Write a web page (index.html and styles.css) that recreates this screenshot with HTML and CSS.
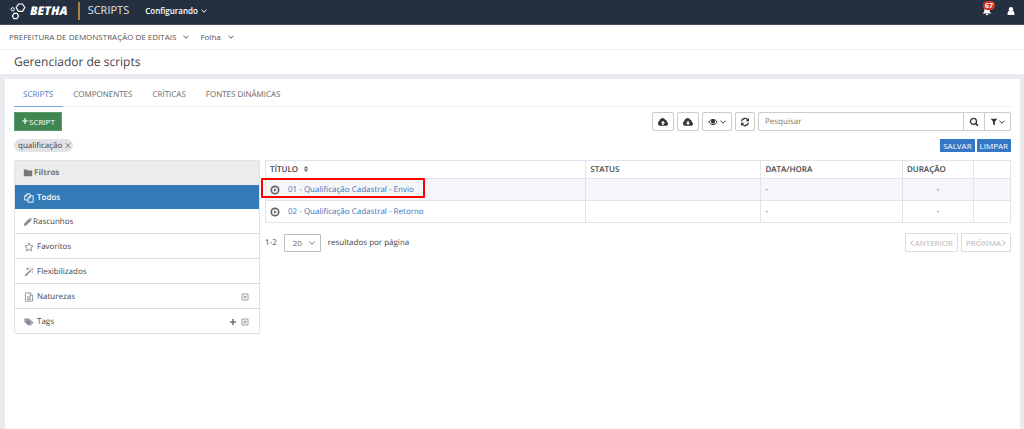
FILE: index.html
```html
<!DOCTYPE html>
<html lang="pt-BR">
<head>
<meta charset="utf-8">
<title>Gerenciador de scripts</title>
<link rel="stylesheet" href="styles.css">
</head>
<body>
<svg class="sprite" aria-hidden="true">
  <symbol id="chev" viewBox="0 0 8 8"><path d="M1.500 2.800 4 5.200 6.500 2.800" fill="none" stroke="currentColor" stroke-width="1"/></symbol>
  <symbol id="expand" viewBox="0 0 8 8"><path d="M1 1h6v6H1zM4 2.3v3.4M2.3 4h3.4" fill="none" stroke="currentColor" stroke-width=".7"/></symbol>
  <symbol id="play" viewBox="0 0 10 10"><circle cx="5" cy="5" r="3.700" fill="none" stroke="currentColor" stroke-width="1.700"/><path d="M4 3.300 6.800 5 4 6.700z" fill="currentColor"/></symbol>
  <symbol id="cloud" viewBox="0 0 12 10"><path d="M3 8.8A2.6 2.6 0 0 1 2.3 4 3.2 3.2 0 0 1 8.3 2.8 2 2 0 0 1 9.8 5 2 2 0 0 1 9.5 8.8z" fill="currentColor"/></symbol>
</svg>
<header class="topbar">
  <a class="brand" href="#">
    <svg class="logo" viewBox="0 0 17 18" fill="none" stroke="#fff" stroke-width="1.2"><path d="M8.5 2h4l2.3 3.5-2.3 3.8h-4L6.2 5.5z"/><path d="M4 11.4h3l1.6 2.6L7 16.6H4L2.400 14z"/><path d="M1.800 5.800h1.700l.9 1.500-.9 1.500H1.800L.9 7.300z" stroke-width="1"/></svg>
    <span>BETHA</span>
  </a>
  <span class="product">SCRIPTS</span>
  <button class="menu">Configurando <svg class="i8"><use href="#chev"/></svg></button>
  <div class="user">
    <button class="bell" aria-label="Notificações">
      <svg viewBox="0 0 10 10" class="i10" fill="#fff"><path d="M5 .5C7 .8 7.600 2.200 7.600 4c0 1.600.6 2.500 1.900 3.500H.5C1.800 6.500 2.400 5.600 2.400 4 2.400 2.200 3 .8 5 .5zM3.700 8h2.600a1.300 1.300 0 0 1-2.600 0z"/></svg>
      <span class="count">67</span>
    </button>
    <button aria-label="Usuário"><svg viewBox="0 0 10 10" class="i10" fill="#fff"><circle cx="5" cy="3.200" r="2.200"/><path d="M1.600 9V7.500c0-1.500.8-2.600 1.900-2.700a2.400 2.400 0 0 0 3 0c1.100.1 1.900 1.200 1.900 2.700V9z"/></svg></button>
  </div>
</header>
<nav class="context">
  <button>PREFEITURA DE DEMONSTRAÇÃO DE EDITAIS <svg class="i8"><use href="#chev"/></svg></button>
  <button>Folha <svg class="i8"><use href="#chev"/></svg></button>
</nav>
<h1 class="title">Gerenciador de scripts</h1>
<main class="panel">
  <nav class="tabs">
    <a class="tab active" href="#">SCRIPTS</a>
    <a class="tab" href="#">COMPONENTES</a>
    <a class="tab" href="#">CRÍTICAS</a>
    <a class="tab" href="#">FONTES DINÂMICAS</a>
  </nav>
  <div class="toolbar">
    <button class="add"><svg viewBox="0 0 8 8" class="i8 raised"><path d="M4 1v6M1 4h6" stroke="currentColor" stroke-width="1.200"/></svg>SCRIPT</button>
    <div class="tools">
      <button class="tool" aria-label="Importar"><svg viewBox="0 0 12 10" class="i12"><use href="#cloud"/><path d="M6 3.800 8.200 6.200H6.700V8H5.300V6.200H3.800z" fill="#fff"/></svg></button>
      <button class="tool" aria-label="Exportar"><svg viewBox="0 0 12 10" class="i12"><use href="#cloud"/><path d="M6 8 8.200 5.800H6.700V4H5.300v1.800H3.800z" fill="#fff"/></svg></button>
      <button class="tool wide" aria-label="Visualizar"><svg viewBox="0 0 10 10" class="i10"><path d="M.8 5C3 1.600 7 1.600 9.200 5 7 8.400 3 8.400.8 5z" fill="none" stroke="currentColor"/><circle cx="5" cy="4.600" r="2.100" fill="currentColor"/></svg><svg class="i8"><use href="#chev"/></svg></button>
      <button class="tool slim" aria-label="Atualizar"><svg viewBox="0 0 10 10" class="i10"><path d="M1.500 4.300A3.500 3.500 0 0 1 7.800 2.900M8.500 5.700A3.500 3.500 0 0 1 2.200 7.100" fill="none" stroke="currentColor" stroke-width="1.300"/><path d="M9 .9v3.300H5.700zM1 9.100V5.800h3.300z" fill="currentColor"/></svg></button>
      <div class="search">
        <input type="text" placeholder="Pesquisar" aria-label="Pesquisar">
        <button aria-label="Buscar"><svg viewBox="0 0 10 10" class="i10"><circle cx="4.500" cy="4.300" r="3" fill="none" stroke="currentColor" stroke-width="1.300"/><path d="m6.600 6.400 2.400 2.400" stroke="currentColor" stroke-width="1.600"/></svg></button>
        <button class="filter" aria-label="Filtrar"><svg viewBox="0 0 8 8" class="i8"><path d="M.6.800h6.800L4.900 3.800v3.600L3.100 6.300V3.800z" fill="currentColor"/></svg><svg class="i8"><use href="#chev"/></svg></button>
      </div>
    </div>
  </div>
  <div class="applied">
    <span class="chip">qualificação <button aria-label="Remover"><svg viewBox="0 0 8 8" class="i8"><path d="m1.800 1.300 4.400 4.400M6.200 1.300 1.800 5.700" stroke="currentColor" stroke-width=".7"/></svg></button></span>
    <div class="actions"><button>SALVAR</button><button>LIMPAR</button></div>
  </div>
  <div class="content">
    <aside class="filters">
      <h2><svg viewBox="0 0 10 10" class="i10"><path d="M.8 1.500h3l.9 1h4.500v5.800H.8z" fill="currentColor"/></svg>Filtros</h2>
      <ul>
        <li class="selected"><a href="#"><svg viewBox="0 0 10 10" class="i10" fill="none" stroke="currentColor" stroke-width=".9"><path d="M4 7H.7V3L2.900.8H6v2M2.900.8V3H.7M4 5l2.200-2.200h3v6.400H4zM6.200 2.800V5H4"/></svg>Todos</a></li>
        <li class="near"><a href="#"><svg viewBox="0 0 10 10" class="i10"><path d="m.8 9 .7-2.800 4.700-4.700 2.100 2.100-4.700 4.700zM6.800 1l.6-.5L9.300 2.400l-.5.700z" fill="currentColor"/></svg>Rascunhos</a></li>
        <li><a href="#"><svg viewBox="0 0 10 10" class="i10"><path d="m5 1 1.200 2.600 2.900.4L7 6l.5 2.900L5 7.500 2.500 8.900 3 6 .9 4l2.900-.4z" fill="none" stroke="currentColor" stroke-width=".9"/></svg>Favoritos</a></li>
        <li><a href="#"><svg viewBox="0 0 10 10" class="i10" fill="none" stroke="currentColor"><path d="m1.200 8.900 5.600-5.600" stroke-width="1.500"/><path d="m7 3 1.500-1.500M2 2h3M3.500.8v2.400M8.200 4v2M6 1h1M8 2.500h1.300" stroke-width=".8"/></svg>Flexibilizados</a></li>
        <li><a href="#"><svg viewBox="0 0 10 10" class="i10" fill="none" stroke="currentColor" stroke-width=".8"><path d="M1.400.8h4.800l2.400 2.400v6H1.400zM6 .8v2.600h2.600M3 4.800h4M3 6.200h4M3 7.600h4"/></svg>Naturezas</a><button aria-label="Expandir naturezas"><svg class="i8"><use href="#expand"/></svg></button></li>
        <li><a href="#"><svg viewBox="0 0 10 10" class="i10" fill="currentColor"><path d="M.4 1.600h3.300l4 4-2.900 3.100L.4 4.800zM4.800 1.600l4.800 4-3.200 3.200-.5-.5 2.300-2.700-4.300-4z"/><circle cx="1.900" cy="3.100" r=".6" fill="#fff"/></svg>Tags</a><button aria-label="Adicionar tag"><svg viewBox="0 0 8 8" class="i8"><path d="M4 1v6M1 4h6" stroke="currentColor" stroke-width="1.600"/></svg></button><button aria-label="Expandir tags"><svg class="i8"><use href="#expand"/></svg></button></li>
      </ul>
    </aside>
    <section class="results">
      <table>
        <colgroup><col class="c-title"><col class="c-status"><col class="c-date"><col class="c-time"><col class="c-more"></colgroup>
        <thead><tr><th>TÍTULO <svg viewBox="0 0 8 8" class="i8 sort"><path d="M4 .9 6.300 3.500H1.700zM4 7.100 6.300 4.500H1.700z" fill="currentColor"/></svg></th><th>STATUS</th><th>DATA/HORA</th><th>DURAÇÃO</th><th></th></tr></thead>
        <tbody>
          <tr class="hover"><td class="marked"><div class="name"><svg class="i10"><use href="#play"/></svg><a href="#">01 - Qualificação Cadastral - Envio</a></div></td><td></td><td>-</td><td class="center">-</td><td></td></tr>
          <tr><td><div class="name"><svg class="i10"><use href="#play"/></svg><a href="#">02 - Qualificação Cadastral - Retorno</a></div></td><td></td><td>-</td><td class="center">-</td><td></td></tr>
        </tbody>
      </table>
      <div class="pager">
        <span>1-2</span>
        <span class="size"><select id="size"><option>20</option></select><svg class="i8"><use href="#chev"/></svg></span>
        <label for="size">resultados por página</label>
        <div class="pages">
          <button disabled><svg viewBox="0 0 4 8" class="i4"><path d="M3.500 1.500 1 4l2.500 2.500" fill="none" stroke="currentColor"/></svg>ANTERIOR</button>
          <button disabled>PRÓXIMA<svg viewBox="0 0 4 8" class="i4"><path d="M.5 1.500 3 4 .5 6.500" fill="none" stroke="currentColor"/></svg></button>
        </div>
      </div>
    </section>
  </div>
</main>
</body>
</html>
```
FILE: styles.css
```css
* { box-sizing: border-box; }
body {
  margin: 0;
  min-height: 100vh;
  display: flex;
  flex-direction: column;
  background: #e9ebef;
  color: #444;
  font: 8px/12px "Open Sans", sans-serif;
  text-rendering: geometricPrecision;
}
button { border: 0; padding: 0; background: none; color: inherit; font: inherit; display: inline-flex; align-items: center; justify-content: center; white-space: nowrap; }
a { color: inherit; text-decoration: none; }
ul { margin: 0; padding: 0; list-style: none; }
svg { flex: none; }
.sprite { position: absolute; width: 0; height: 0; }
.i4 { width: 4px; height: 8px; }
.i8 { width: 8px; height: 8px; }
.i10 { width: 10px; height: 10px; }
.i12 { width: 12px; height: 10px; }

.topbar { display: flex; align-items: center; height: 25px; padding: 0 8px 2px 10px; background: #24303f; border-bottom: 1px solid #46505d; color: #fff; }
.brand { display: flex; align-items: center; gap: 3px; height: 18px; padding-right: 10px; border-right: 2px solid #a8853f; font-size: 12px; font-weight: 800; font-style: italic; }
.logo { width: 17px; height: 18px; }
.product { margin-left: 8px; font-size: 11px; color: #e4e7ea; }
.menu { margin-left: 16px; gap: 2px; font-weight: 600; }
.user { margin-left: auto; display: flex; gap: 14px; }
.bell { position: relative; }
.count { position: absolute; left: 1px; top: -5px; padding: 0 2px; border-radius: 5px; background: #d9302c; font-size: 7px; line-height: 9px; font-weight: 700; }

.context { display: flex; gap: 10px; height: 25px; padding: 0 9px; background: #fff; border-bottom: 1px solid #eee; color: #555; }
.context button { gap: 6px; }
.title { margin: 0; padding: 3px 14px; background: #fff; font-size: 12px; line-height: 18px; font-weight: 400; }
.panel { flex: 1; margin: 5px 4px 0 5px; padding: 0 9px; background: #fff; }

.tabs { display: flex; border-bottom: 1px solid #eee; color: #666; }
.tab { padding: 10px 10px 5px; margin-bottom: -1px; border-bottom: 1px solid transparent; }
.tab.active { padding-left: 9px; color: #3a76bf; border-color: #76a5df; }
.toolbar { display: flex; justify-content: space-between; margin-top: 5px; }
.add { height: 19px; padding: 0 6px; background: #3f8651; border: 1px solid #5c9a6b; color: #fff; }
.raised { margin-bottom: 2px; }
.tools { display: flex; gap: 3px; color: #333; }
.tool { width: 22px; height: 19px; border: 1px solid #ccc; border-radius: 2px; }
.tool.wide { width: 30px; gap: 1px; }
.tool.slim { width: 20px; }
.search { display: flex; height: 19px; border: 1px solid #ccc; border-radius: 2px; }
.search input { width: 204px; padding: 0 6px; border: 0; background: transparent; font: 8px/12px "Open Sans", sans-serif; text-rendering: inherit; }
.search input::placeholder { color: #777; opacity: 1; }
.search button { width: 21px; border-left: 1px solid #ccc; }
.search .filter { width: 26px; }
.applied { display: flex; justify-content: space-between; align-items: center; margin-top: 8px; }
.chip { display: flex; align-items: center; gap: 2px; height: 13px; padding: 0 1px 0 4px; border-radius: 7px; background: #e2e3e7; }
.actions { display: flex; gap: 2px; }
.actions button { height: 13px; padding: 0 3px; background: #3577c4; color: #fff; }

.content { display: grid; grid-template-columns: 246px 1fr; gap: 5px; align-items: start; margin-top: 8px; }
.filters { border: 1px solid #e3e3e3; border-bottom: 0; border-radius: 2px; }
.filters h2 { display: flex; align-items: center; gap: 1px; height: 24px; margin: 0; padding: 0 8px; background: #ececec; color: #777; font-size: 8px; font-weight: 700; }
.filters li { display: flex; align-items: center; gap: 4px; height: 25px; padding: 1px 10px 0 9px; border-bottom: 1px solid #ddd; color: #707580; }
.filters a { flex: 1; display: flex; align-items: center; gap: 3px; color: #444; }
.filters a svg { color: #858996; }
.filters .near { padding-left: 8px; }
.filters .near a { gap: 0; }
.filters .selected { height: 24px; border: 0; background: #337ab7; }
.filters .selected a, .filters .selected svg { color: #fff; }
.filters .selected a { font-weight: 600; }

table { width: 100%; table-layout: fixed; border-collapse: collapse; }
th, td { border: 1px solid #e2e4e8; padding: 1px 4px 0; text-align: left; }
th { height: 18px; font-weight: 600; }
td { height: 22px; }
.c-title { width: 43%; }
.c-status { width: 23.5%; }
.c-date { width: 19%; }
.c-time { width: 9.5%; }
.c-more { width: 5%; }
.sort { vertical-align: -1px; margin-left: 2px; color: #666; }
.hover { background: #f4f6fa; }
.center { text-align: center; }
.name { display: flex; align-items: center; gap: 8px; color: #666; }
.name a { color: #3d72b8; }
.marked { position: relative; }
.marked::after { content: ""; position: absolute; left: -5px; top: -1px; width: 160px; height: 16px; border: 2px solid #f00; border-radius: 1px; }
.pager { display: flex; align-items: center; gap: 7px; margin-top: 10px; }
.size { display: grid; align-items: center; }
.size select, .size svg { grid-area: 1 / 1; }
.size svg { justify-self: end; margin-right: 5px; pointer-events: none; color: #777; }
.size select { width: 37px; height: 18px; padding: 0 8px; appearance: none; border: 1px solid #bbb; border-radius: 1px; background: #fff; color: #666; font: 8px/12px "Open Sans", sans-serif; }
.pages { display: flex; gap: 3px; margin-left: auto; }
.pages button { height: 19px; padding: 0 4px; gap: 1px; border: 1px solid #ddd; border-radius: 1px; color: #b5b5b5; }
```
